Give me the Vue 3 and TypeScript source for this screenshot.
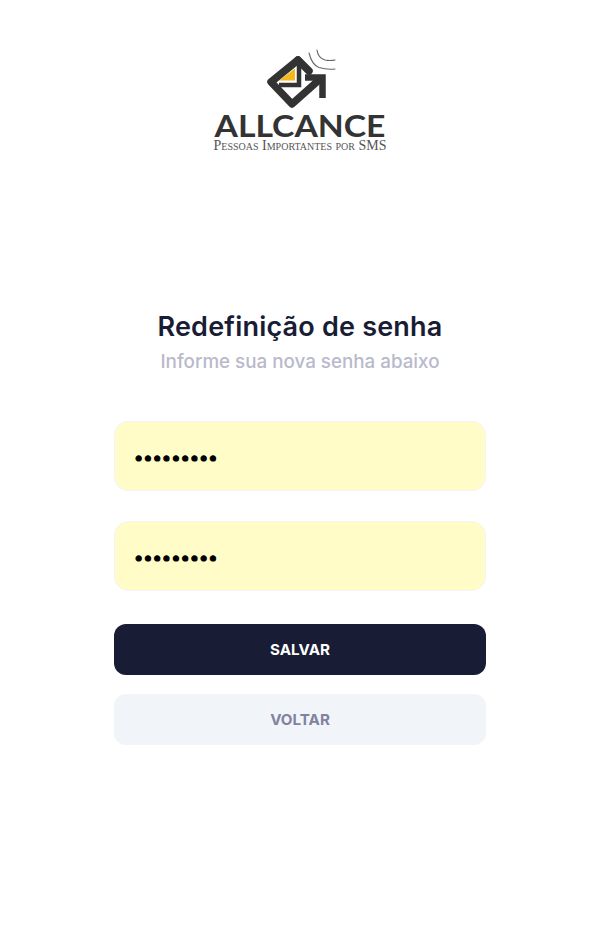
<script setup lang="ts">
const pass = "123456789";
</script>

<template>
  <main class="page">
    <svg class="logo" width="180" height="110" viewBox="0 0 180 110" role="img" aria-label="Allcance">
      <g transform="translate(-210,-46)">
        <path d="M298 60 L271 82 L292 104 L319 80" fill="none" stroke="#333" stroke-width="7.5" stroke-linejoin="round" stroke-linecap="round"/>
        <path d="M298 60 L309 71" fill="none" stroke="#333" stroke-width="7.5" stroke-linecap="round"/>
        <path d="M279 80.5 L295 68.5 L295 80.5 Z" fill="#f2b91f"/>
        <path d="M299 65 L299 85 L279 85" fill="none" stroke="#333" stroke-width="4.5"/>
        <path d="M305 77.5 L322.5 77.5 L322.5 98" fill="none" stroke="#333" stroke-width="6.5"/>
        <path d="M309 53 Q312 65 319 67.5 Q327 70 335 69 M317 50 Q318 58 325 60 Q330 61 335 60" fill="none" stroke="#666" stroke-width="1.1" stroke-linecap="round"/>
      </g>
      <text class="word" x="90" y="91" text-anchor="middle" textLength="171" lengthAdjust="spacingAndGlyphs">ALLCANCE</text>
      <text class="tag" x="90" y="104" text-anchor="middle" textLength="173" lengthAdjust="spacingAndGlyphs">Pessoas Importantes por SMS</text>
    </svg>

    <h1 class="title">Redefinição de senha</h1>
    <p class="subtitle">Informe sua nova senha abaixo</p>

    <form class="form" @submit.prevent>
      <input class="field" type="password" :value="pass" />
      <input class="field" type="password" :value="pass" />
      <button class="btn primary" type="submit">SALVAR</button>
      <button class="btn secondary" type="button">VOLTAR</button>
    </form>
  </main>
</template>

<style>
body { margin: 0; background: #fff; }
</style>

<style scoped>
.page {
  min-height: 947px;
  display: flex;
  flex-direction: column;
  align-items: center;
  padding-top: 46px;
  box-sizing: border-box;
  font-family: Inter, "Noto Sans", sans-serif;
}
.logo { display: block; }
.word {
  font-family: Lato, sans-serif;
  font-weight: 700;
  font-size: 31px;
  fill: #333;
}
.tag {
  font-family: "Liberation Serif", serif;
  font-variant: small-caps;
  font-size: 14px;
  fill: #555;
}
.title {
  margin: 152px 0 0;
  font-size: 27px;
  letter-spacing: 0.2px;
  line-height: 38px;
  font-weight: 600;
  color: #181d35;
}
.subtitle {
  margin: 3px 0 0;
  font-size: 18.8px;
  line-height: 26px;
  font-weight: 500;
  color: #b9b9cc;
}
.form {
  width: 372px;
  margin-top: 46px;
  display: flex;
  flex-direction: column;
}
.field {
  box-sizing: border-box;
  height: 70px;
  padding: 2px 19px 0;
  margin-bottom: 30px;
  border: 1px solid #f3f4f6;
  border-radius: 14px;
  background: #fffcc8;
  color: #000;
  font-size: 16.5px;
  -webkit-text-stroke: 1.2px #000;
  font-family: inherit;
  outline: none;
}
.field + .field { margin-bottom: 33px; }
.btn {
  height: 51px;
  border: 0;
  border-radius: 12px;
  font-family: inherit;
  font-size: 15.2px;
  font-weight: 700;
}
.primary { background: #181d35; color: #fff; margin-bottom: 19px; }
.secondary { background: #f1f4f8; color: #81829f; }
</style>
